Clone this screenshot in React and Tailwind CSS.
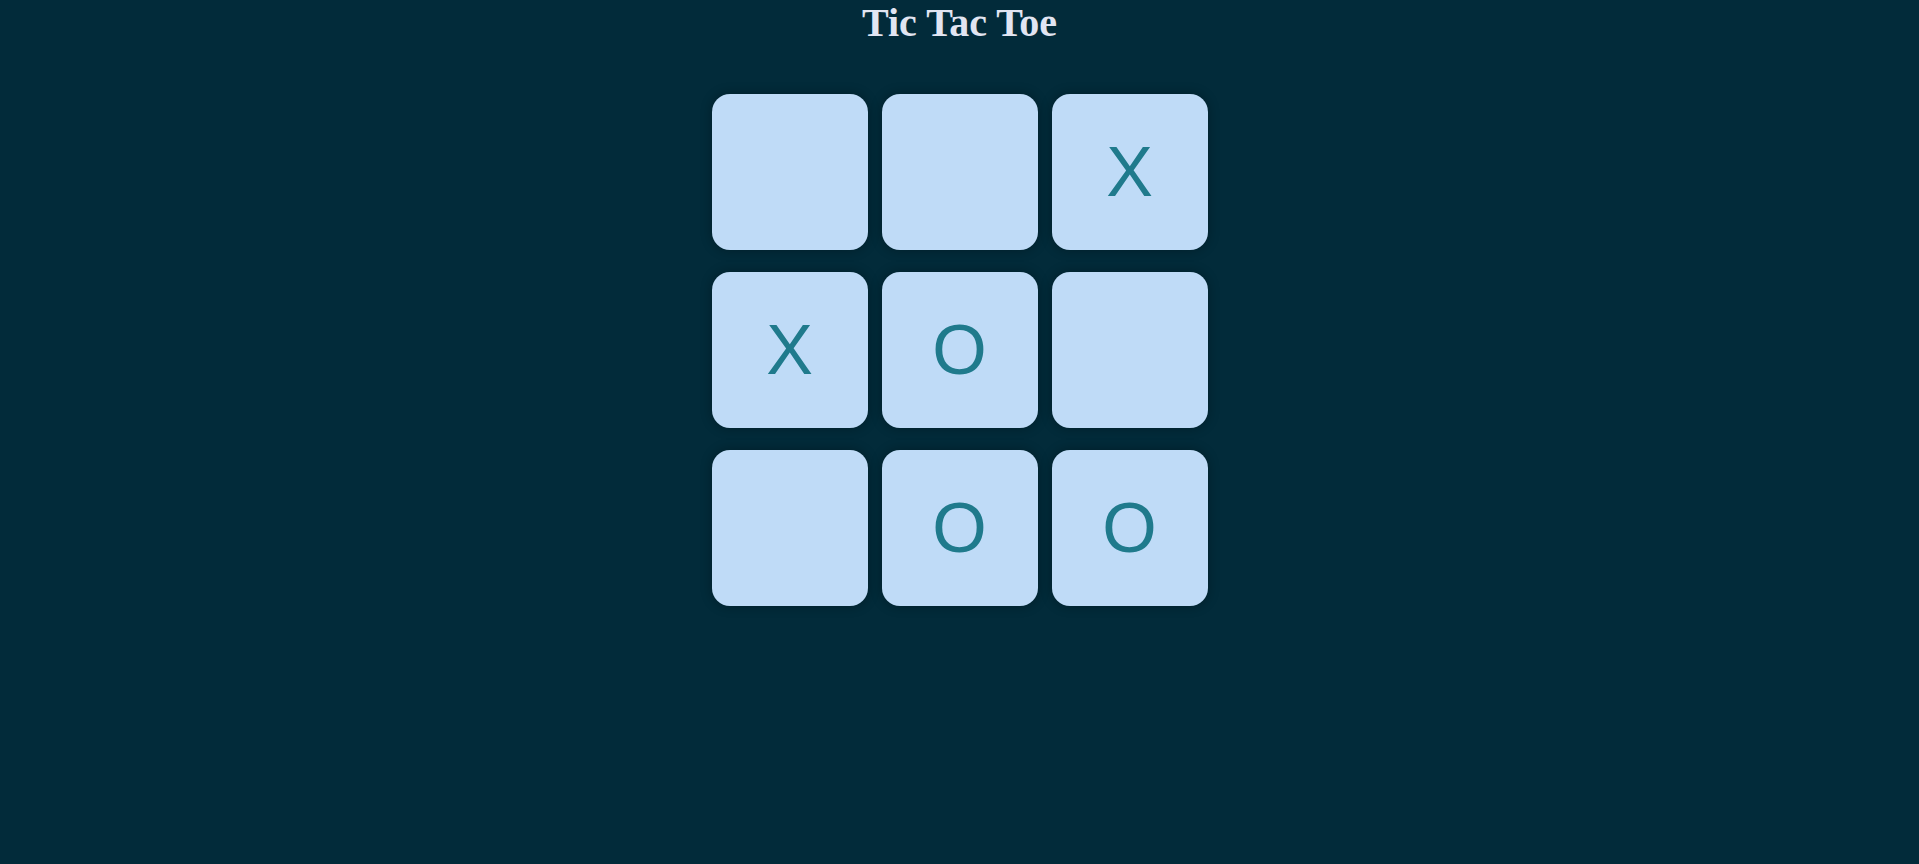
import React from "react";

const board = ["", "", "X", "X", "O", "", "", "O", "O"];

const Cell = ({ value }) => (
  <div className="w-[156px] h-[156px] rounded-[18px] bg-[#bfdbf7] shadow-[0_0_12px_rgba(0,0,0,0.3)] flex items-center justify-center">
    <span className="text-[70px] leading-none text-[#1f7a8c] font-['Liberation_Sans',Arial,sans-serif]">
      {value}
    </span>
  </div>
);

export default function App() {
  return (
    <div className="min-h-screen w-full bg-[#022b3a] flex flex-col items-center">
      <h1 className="mt-[1px] text-[40px] leading-[44px] font-bold text-[#e1e5f2] font-['Liberation_Serif','Times_New_Roman',serif]">
        Tic Tac Toe
      </h1>
      <div className="mt-[49px] grid grid-cols-3 gap-x-[14px] gap-y-[22px]">
        {board.map((v, i) => (
          <Cell key={i} value={v} />
        ))}
      </div>
    </div>
  );
}
